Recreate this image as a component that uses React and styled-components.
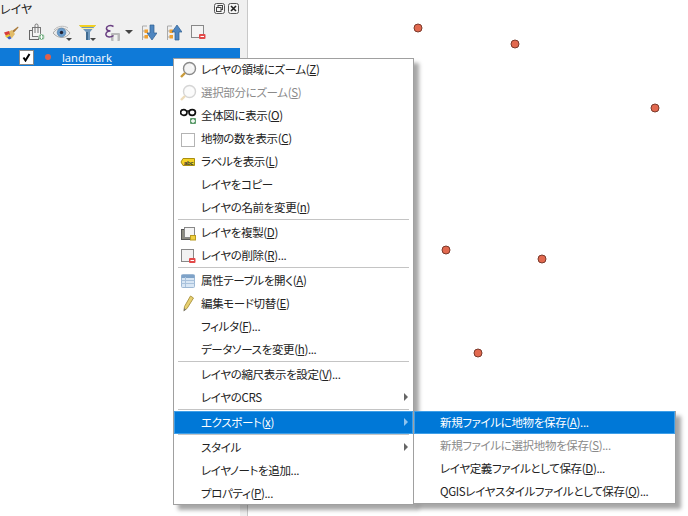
import React from 'react';
import styled, { createGlobalStyle } from 'styled-components';

const Global = createGlobalStyle`
  html, body { margin: 0; padding: 0; background: #fff; }
  body { font-family: "Noto Sans CJK JP", "Liberation Sans", sans-serif; font-feature-settings: "palt"; }
  u { text-underline-offset: 1px; }
`;
const Page = styled.div`position: relative; width: 688px; height: 516px; overflow: hidden; display: flex; background: #fff;`;
const Panel = styled.div`width: 240px; height: 100%; display: flex; flex-direction: column; background: #f0f0f0;`;
const TitleBar = styled.div`height: 17px; display: flex; align-items: center; justify-content: space-between; padding-right: 1px; font-size: 12px; color: #222;`;
const WinButtons = styled.div`display: flex; gap: 3px;`;
const Toolbar = styled.div`height: 31px; box-sizing: border-box; display: flex; align-items: flex-start; padding: 6px 0 0 4px;`;
const ToolIcon = styled.svg`width: ${p => p.$w}px; height: 18px; flex: none; margin-right: ${p => p.$mr || 0}px;`;
const Tree = styled.div`flex: 1; background: #fff;`;
const LayerRow = styled.div`height: 18px; background: #0f7ad8; display: flex; align-items: center; padding-left: 19px; color: #fff; font: 11.2px "Open Sans", sans-serif;`;
const Check = styled.span`width: 13px; height: 13px; background: #fff; border: 1px solid #888; display: flex; align-items: center; justify-content: center; margin-right: 11px;`;
const LayerDot = styled.span`width: 6px; height: 6px; border-radius: 50%; background: #e0604a; margin-right: 11px;`;
const LayerName = styled.u`text-underline-offset: 2px;`;
const Splitter = styled.div`width: 7px; background: #f0f0f0; border-right: 1px solid #c8c8c8;`;
const MapCanvas = styled.div`position: relative; flex: 1; background: #fff;`;
const Point = styled.span`position: absolute; width: 7px; height: 7px; border-radius: 50%; background: #e2694f; border: 1px solid #7a3a2c; transform: translate(-50%, -50%);`;

const Menu = styled.div`
  position: absolute; box-sizing: border-box; background: #fff; border: 1px solid #a0a0a0;
  box-shadow: 5px 5px 4px rgba(0,0,0,.35);
  left: ${p => p.$x}px; top: ${p => p.$y}px; width: ${p => p.$w}px; height: ${p => p.$h}px;
`;
const MenuList = styled.div`margin-top: -1px;`;
const Row = styled.div`
  position: relative; box-sizing: border-box; height: 23px; display: flex; align-items: center;
  padding: 0 0 1px ${p => p.$indent}px; font-size: 11.5px; letter-spacing: -0.35px; white-space: nowrap;
  color: ${p => p.$disabled ? '#8a8a8a' : p.$active ? '#fff' : '#222'};
  background: ${p => p.$active ? '#0078d7' : 'transparent'};
  box-shadow: ${p => p.$active ? 'inset 0 0 0 1px #3f9fe8' : 'none'};
`;
const IconSlot = styled.span`position: absolute; left: 6px; top: 2px; width: 18px; height: 18px; display: block;`;
const Arrow = styled.span`position: absolute; right: 5px; top: 7px; border-left: 4px solid ${p => p.$active ? '#8fc3ee' : '#666'}; border-top: 4px solid transparent; border-bottom: 4px solid transparent;`;
const Sep = styled.div`height: 1px; background: #c4c4c4; margin: 0 4px 1px 4px;`;

const Ic = ({ children }) => <IconSlot><svg width="18" height="18" viewBox="0 0 18 18">{children}</svg></IconSlot>;

const ZoomI = ({ faded }) => (
  <Ic><g opacity={faded ? .35 : 1}><circle cx="9.500" cy="8.500" r="6" fill="#f4f4f4" stroke="#8a8a8a" strokeWidth="1.400" /><path d="M11 5a3 3 0 0 1 2 3" stroke="#fff" fill="none" /><path d="M5 13 L1 17" stroke="#c99a3a" strokeWidth="2.400" /></g></Ic>
);
const icons = {
  zoom: <ZoomI />,
  zoomOff: <ZoomI faded />,
  glasses: <Ic><ellipse cx="3.800" cy="6.500" rx="3.200" ry="2.800" fill="#fff" stroke="#111" strokeWidth="1.700" /><ellipse cx="12.200" cy="6.500" rx="3.200" ry="2.800" fill="#fff" stroke="#111" strokeWidth="1.700" /><path d="M6.500 5h3" stroke="#111" strokeWidth="1.400" /><rect x="10" y="12" width="6" height="6" rx="1" fill="#5d9c6c" /><path d="M13 13v4M11 15h4" stroke="#fff" strokeWidth="1.300" /></Ic>,
  box: <Ic><rect x="1.500" y="4.500" width="13" height="13" fill="#fff" stroke="#b4b4b4" /></Ic>,
  label: <Ic><path d="M3 6.500h11.500v7H3L1 10z" fill="#f5d327" stroke="#a98e10" /><text x="4" y="12.500" fontSize="6" fontWeight="700" fontFamily="Liberation Sans" fill="#333">abc</text></Ic>,
  dup: <Ic><rect x="1.500" y="6.500" width="10" height="10" fill="#8a8a80" stroke="#555" /><rect x="4.500" y="4.500" width="10" height="10" fill="#f4f4f4" stroke="#888" /><rect x="10.500" y="12.500" width="5" height="4.500" fill="#f0d040" stroke="#b89a20" /></Ic>,
  del: <Ic><rect x="1.500" y="3.500" width="12" height="12" fill="#f2f2f2" stroke="#888" /><rect x="9" y="12" width="6.500" height="5" rx="1" fill="#e24a4a" /><path d="M10.500 14.500h3.500" stroke="#fff" /></Ic>,
  table: <Ic><rect x="1.500" y="3.500" width="13" height="13" rx="1" fill="#d8e6f4" stroke="#9db8d4" /><path d="M1.500 5.500h13" stroke="#7ea2c8" strokeWidth="3" /><path d="M1.500 9.500h13M1.500 12.500h13M5.500 6v10" stroke="#a9c2dc" /></Ic>,
  pencil: <Ic><path d="M10.500 2l3 2L7 14.500 4 16.500 4.500 12.500z" fill="#e8d070" stroke="#b09a48" /><path d="M4.200 14l-.7 3.500 2.500-1.800z" fill="#777" /></Ic>,
};

const items = [
  { icon: 'zoom', c: <>レイヤの領域にズーム(<u>Z</u>)</> },
  { icon: 'zoomOff', disabled: true, c: <>選択部分にズーム(<u>S</u>)</> },
  { icon: 'glasses', c: <>全体図に表示(<u>O</u>)</> },
  { icon: 'box', c: <>地物の数を表示(<u>C</u>)</> },
  { icon: 'label', c: <>ラベルを表示(<u>L</u>)</> },
  { c: <>レイヤをコピー</> },
  { c: <>レイヤの名前を変更(<u>n</u>)</> },
  { sep: true },
  { icon: 'dup', c: <>レイヤを複製(<u>D</u>)</> },
  { icon: 'del', c: <>レイヤの削除(<u>R</u>)...</> },
  { sep: true },
  { icon: 'table', c: <>属性テーブルを開く(<u>A</u>)</> },
  { icon: 'pencil', c: <>編集モード切替(<u>E</u>)</> },
  { c: <>フィルタ(<u>F</u>)...</> },
  { c: <>データソースを変更(<u>h</u>)...</> },
  { sep: true },
  { c: <>レイヤの縮尺表示を設定(<u>V</u>)...</> },
  { arrow: true, c: <>レイヤのCRS</> },
  { sep: true },
  { arrow: true, active: true, c: <>エクスポート(<u>x</u>)</> },
  { sep: true },
  { arrow: true, c: <>スタイル</> },
  { c: <>レイヤノートを追加...</> },
  { c: <>プロパティ(<u>P</u>)...</> },
];
const subItems = [
  { active: true, c: <>新規ファイルに地物を保存(<u>A</u>)...</> },
  { disabled: true, c: <>新規ファイルに選択地物を保存(<u>S</u>)...</> },
  { c: <>レイヤ定義ファイルとして保存(<u>D</u>)...</> },
  { c: <>QGISレイヤスタイルファイルとして保存(<u>Q</u>)...</> },
];
const points = [[170, 28], [267, 44], [407, 108], [198, 250], [294, 259], [230, 353]];
const Caret = ({ x, y, w = 6 }) => <path d={`M${x} ${y}h${w}l-${w / 2} ${w / 2}z`} fill="#444" />;

export default function App() {
  return (
    <Page>
      <Global />
      <Panel>
        <TitleBar>
          <span>レイヤ</span>
          <WinButtons>
            <svg width="11" height="11" viewBox="0 0 11 11"><rect x=".5" y=".5" width="10" height="10" rx="2" fill="#f4f4f4" stroke="#555" /><rect x="4" y="2.500" width="4.500" height="4" fill="none" stroke="#444" /><rect x="2.500" y="4.500" width="4.500" height="4" fill="#f4f4f4" stroke="#444" /></svg>
            <svg width="11" height="11" viewBox="0 0 11 11"><rect x=".5" y=".5" width="10" height="10" rx="2" fill="#f4f4f4" stroke="#555" /><path d="M3 3l5 5M8 3l-5 5" stroke="#222" strokeWidth="1.600" /></svg>
          </WinButtons>
        </TitleBar>
        <Toolbar>
          <ToolIcon viewBox="0 0 16 18" $w={16} $mr={9}>
            <path d="M14 3.500L7.500 8.500 9 10.500 14.500 4.500z" fill="#a87838" />
            <path d="M4 9l4-2 3 4-3 4-4-1z" fill="#e2bc68" />
            <path d="M0 9.500L5 8l1 4-4 1z" fill="#d83c3c" />
            <path d="M1 13l4-2 1 2-3 2z" fill="#e8c830" />
            <path d="M3 14.500l3-1.500 1.500 2.500-2.500 1z" fill="#4060c0" />
          </ToolIcon>
          <ToolIcon viewBox="0 0 16 18" $w={16} $mr={8}>
            <rect x=".5" y="7.500" width="9" height="9" fill="#eee" stroke="#666" />
            <rect x="3.500" y="4.500" width="8" height="9" fill="#f4f4f4" stroke="#777" />
            <path d="M6 10V2.500a1.500 1.500 0 0 1 3 0V10" fill="none" stroke="#777" />
            <circle cx="12.500" cy="14" r="3" fill="#6aa878" stroke="#fff" strokeWidth=".5" />
            <path d="M12.500 12v4M10.500 14h4" stroke="#fff" />
          </ToolIcon>
          <ToolIcon viewBox="0 0 20 18" $w={20} $mr={6}>
            <path d="M0 10c4-6 12-7 17 0-4 6-12 6-17 0z" fill="#eaeaea" stroke="#aaa" />
            <path d="M1 7c3-4 10-5 14-2" fill="none" stroke="#bbb" />
            <circle cx="8.500" cy="9.500" r="4.300" fill="#6a9ccb" stroke="#4a7aa8" strokeWidth=".6" />
            <circle cx="8.500" cy="9.500" r="1.700" fill="#223" />
            <Caret x={13} y={15} />
          </ToolIcon>
          <ToolIcon viewBox="0 0 19 18" $w={19} $mr={7}>
            <path d="M0 2h17l-6 7v8H7V9z" fill="#6f98bd" />
            <path d="M7 9v8h2V9z" fill="#3f6a90" />
            <path d="M0 2h17l-1.500 2H1.500z" fill="#f2d020" />
            <path d="M2 5h13l-1 1H3z" fill="#fff3a0" />
            <Caret x={11} y={15} />
          </ToolIcon>
          <ToolIcon viewBox="0 0 17 18" $w={17} $mr={3}>
            <rect x="6" y="10" width="9" height="8" rx="1" fill="#b8b8b8" />
            <rect x="8.500" y="12" width="4" height="6" fill="#f0f0f0" />
            <path d="M8.500 3.500C5 1.500 1 3 1.500 6 2 8 4 8 5.500 8 2 8 .5 10 1 12c.6 2.500 5 2.500 7.500.5" fill="none" stroke="#6a3f82" strokeWidth="1.500" />
          </ToolIcon>
          <ToolIcon viewBox="0 0 8 18" $w={8} $mr={8}><path d="M0 7h8L4 11z" fill="#444" /></ToolIcon>
          <ToolIcon viewBox="0 0 16 18" $w={16} $mr={9}>
            <path d="M1.500 3v14M1.500 3H6M1.500 8H6M1.500 14H6" stroke="#aaa" fill="none" />
            <rect x="3.500" y="6.500" width="3.500" height="3.500" fill="#f0a030" />
            <rect x="3.500" y="12" width="3.500" height="3.500" fill="#f0a030" />
            <path d="M9 2h4v8h3l-5 7-5-7h3z" fill="#4f86c0" stroke="#2f5f90" strokeWidth=".7" />
          </ToolIcon>
          <ToolIcon viewBox="0 0 16 18" $w={16} $mr={9}>
            <path d="M1.500 3v14M1.500 3H6M1.500 8H6M1.500 14H6" stroke="#aaa" fill="none" />
            <rect x="3.500" y="6.500" width="3.500" height="3.500" fill="#f0a030" />
            <rect x="3.500" y="12" width="3.500" height="3.500" fill="#f0a030" />
            <path d="M9 17h4V9h3L11 2 6 9h3z" fill="#4f86c0" stroke="#2f5f90" strokeWidth=".7" />
          </ToolIcon>
          <ToolIcon viewBox="0 0 16 18" $w={16}>
            <rect x=".5" y="2.500" width="12" height="12" fill="#f4f4f4" stroke="#888" />
            <rect x="8" y="11" width="6.500" height="5" rx="1" fill="#e24a4a" />
            <path d="M9.500 13.500h3.500" stroke="#fff" />
          </ToolIcon>
        </Toolbar>
        <LayerRow>
          <Check><svg width="9" height="9" viewBox="0 0 9 9"><path d="M1.500 4.500L3.500 7.500 7.500 1" fill="none" stroke="#000" strokeWidth="2" /></svg></Check>
          <LayerDot />
          <LayerName>landmark</LayerName>
        </LayerRow>
        <Tree />
      </Panel>
      <Splitter />
      <MapCanvas>
        {points.map(([x, y]) => <Point key={x} style={{ left: x, top: y }} />)}
      </MapCanvas>
      <Menu $x={173} $y={58} $w={241} $h={447}>
        <MenuList>
          {items.map((it, i) => it.sep ? <Sep key={i} /> : (
            <Row key={i} $indent={27} $active={it.active} $disabled={it.disabled}>
              {it.icon && icons[it.icon]}
              <span>{it.c}</span>
              {it.arrow && <Arrow $active={it.active} />}
            </Row>
          ))}
        </MenuList>
      </Menu>
      <Menu $x={413} $y={411} $w={263} $h={93}>
        <MenuList>
          {subItems.map((it, i) => (
            <Row key={i} $indent={26} $active={it.active} $disabled={it.disabled}>
              <span>{it.c}</span>
            </Row>
          ))}
        </MenuList>
      </Menu>
    </Page>
  );
}
